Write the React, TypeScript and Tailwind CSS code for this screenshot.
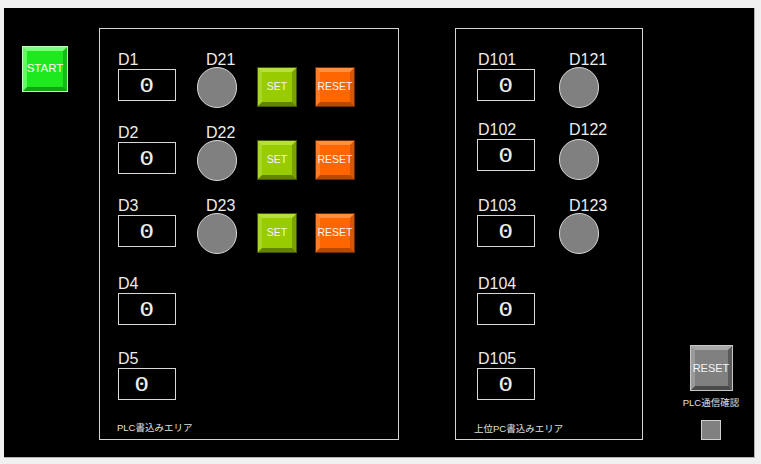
import React from "react";

const LBL = "h-[18px] leading-[18px] text-[16px] text-[#ececec] whitespace-nowrap font-['Liberation_Sans',Arial,sans-serif]";

function ValueBox({ shift }: { shift?: boolean }) {
  return (
    <div className={`h-[32px] w-[58px] border border-[#d8d8d8] flex items-center ${shift ? "justify-start pl-[17px]" : "justify-center"}`}>
      <span className="inline-block scale-x-[1.3] text-[19px] leading-none text-[#ececec] font-['DejaVu_Sans_Mono',monospace]">0</span>
    </div>
  );
}

function Lamp({ label, ml, pl, offset }: { label: string; ml: string; pl: string; offset: string }) {
  return (
    <div className={`flex flex-col w-[40px] ${ml}`}>
      <div className={`${LBL} ${pl}`}>{label}</div>
      <div className={`w-[40px] h-[41px] rounded-full bg-[#808080] border border-[#d6d6d6] ${offset}`} />
    </div>
  );
}

function SetBtn() {
  return (
    <div className="ml-[20px] mt-[16px] w-[40px] h-[40px] border border-[#3f5500]">
      <div className="w-full h-full border-[4px] border-t-[#b8e03c] border-l-[#aad624] border-r-[#7aa300] border-b-[#628400] bg-[#99cc00] flex items-center justify-center">
        <span className="text-[10.5px] text-[#f4f4f4] font-['Liberation_Sans',Arial,sans-serif]">SET</span>
      </div>
    </div>
  );
}

function ResetBtn() {
  return (
    <div className="ml-[18px] mt-[16px] w-[40px] h-[40px] border border-[#6b2a00]">
      <div className="w-full h-full border-[4px] border-t-[#ff9040] border-l-[#ff7d22] border-r-[#d95600] border-b-[#b84900] bg-[#ff6600] flex items-center justify-center">
        <span className="text-[10.5px] text-[#f4f4f4] font-['Liberation_Sans',Arial,sans-serif]">RESET</span>
      </div>
    </div>
  );
}

type Row = { label: string; lamp?: string; buttons?: boolean; mt: string; offset?: string; shift?: boolean };

const leftRows: Row[] = [
  { label: "D1", lamp: "D21", buttons: true, mt: "mt-[22px]", offset: "-mt-[2px]" },
  { label: "D2", lamp: "D22", buttons: true, mt: "mt-[23px]", offset: "-mt-[2px]" },
  { label: "D3", lamp: "D23", buttons: true, mt: "mt-[23px]", offset: "-mt-[2px]" },
  { label: "D4", mt: "mt-[28px]" },
  { label: "D5", mt: "mt-[25px]", shift: true },
];

const rightRows: Row[] = [
  { label: "D101", lamp: "D121", mt: "mt-[22px]", offset: "-mt-[2px]" },
  { label: "D102", lamp: "D122", mt: "mt-[20px]", offset: "mt-0" },
  { label: "D103", lamp: "D123", mt: "mt-[26px]", offset: "-mt-[2px]" },
  { label: "D104", mt: "mt-[28px]" },
  { label: "D105", mt: "mt-[25px]" },
];

export default function App() {
  return (
    <div className="w-[761px] h-[464px] bg-[#f0f0f0] pt-[8px] pl-[4px]">
      <div className="w-[751px] h-[450px] bg-black border-r border-b border-[#b0b0b0] flex items-start">
        {/* START */}
        <div className="ml-[18px] mt-[38px] w-[46px] h-[46px] border border-[#b8ffb8]">
          <div className="w-full h-full border-[4px] border-t-[#7dff7d] border-l-[#5cff5c] border-r-[#10c010] border-b-[#0aa80a] bg-[#1ee81e] flex items-center justify-center">
            <span className="text-[11.5px] text-white font-['Liberation_Sans',Arial,sans-serif]">START</span>
          </div>
        </div>

        {/* Left panel */}
        <div className="ml-[31px] mt-[20px] w-[300px] h-[412px] border border-[#d4d4d4] flex flex-col pl-[18px]">
          {leftRows.map((r) => (
            <div key={r.label} className={`flex items-start h-[50px] ${r.mt}`}>
              <div className="flex flex-col w-[58px]">
                <div className={LBL}>{r.label}</div>
                <ValueBox shift={r.shift} />
              </div>
              {r.lamp && <Lamp label={r.lamp} ml="ml-[21px]" pl="pl-[9px]" offset={r.offset || ""} />}
              {r.buttons && (
                <>
                  <SetBtn />
                  <ResetBtn />
                </>
              )}
            </div>
          ))}
          <div className="mt-auto mb-[5px] -ml-[1px] text-[9.5px] leading-[12px] text-[#e0e0e0] font-['Liberation_Sans','Noto_Sans_CJK_JP',sans-serif]">
            PLC書込みエリア
          </div>
        </div>

        {/* Right panel */}
        <div className="ml-[56px] mt-[20px] w-[188px] h-[412px] border border-[#d4d4d4] flex flex-col pl-[21px]">
          {rightRows.map((r) => (
            <div key={r.label} className={`flex items-start h-[50px] ${r.mt}`}>
              <div className="flex flex-col w-[58px]">
                <div className={`${LBL} pl-[1px]`}>{r.label}</div>
                <ValueBox />
              </div>
              {r.lamp && <Lamp label={r.lamp} ml="ml-[24px]" pl="pl-[10px]" offset={r.offset || ""} />}
            </div>
          ))}
          <div className="mt-auto mb-[4px] -ml-[3px] text-[9.5px] leading-[12px] text-[#e0e0e0] font-['Liberation_Sans','Noto_Sans_CJK_JP',sans-serif]">
            上位PC書込みエリア
          </div>
        </div>

        {/* Right column */}
        <div className="ml-[33px] mt-[337px] w-[70px] flex flex-col items-center">
          <div className="w-[43px] h-[46px] border border-[#c8c8c8]">
            <div className="w-full h-full border-[4px] border-t-[#a8a8a8] border-l-[#9a9a9a] border-r-[#5a5a5a] border-b-[#4a4a4a] bg-[#808080] flex items-center justify-center">
              <span className="text-[11px] text-[#f4f4f4] font-['Liberation_Sans',Arial,sans-serif]">RESET</span>
            </div>
          </div>
          <div className="mt-[6px] text-[9.5px] leading-[12px] text-[#e0e0e0] whitespace-nowrap font-['Liberation_Sans','Noto_Sans_CJK_JP',sans-serif]">
            PLC通信確認
          </div>
          <div className="mt-[11px] w-[20px] h-[20px] bg-[#808080] border border-[#d0d0d0]" />
        </div>
      </div>
    </div>
  );
}
